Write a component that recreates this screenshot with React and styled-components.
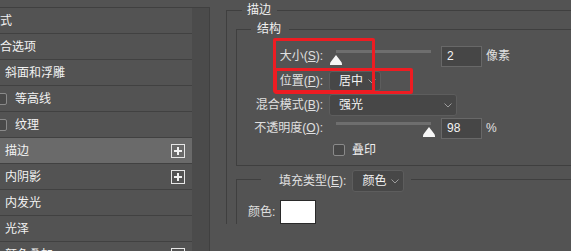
import styled, { createGlobalStyle } from "styled-components"

const GlobalStyle = createGlobalStyle`
  html, body {
    margin: 0;
    height: 100%;
    overflow: hidden;
    background: #535353;
  }
  body {
    font-family: "Liberation Sans", "Noto Sans CJK SC", sans-serif;
    font-size: 12px;
    color: #e2e2e2;
  }
`

const Page = styled.div`
  position: relative;
  display: flex;
  width: 571px;
  height: 251px;
  overflow: hidden;
  background: #535353;
`

const Sidebar = styled.div`
  display: flex;
  flex-shrink: 0;
  width: 210px;
  margin-top: 7px;
  border-top: 1px solid #404040;
`

const List = styled.div`
  width: 192px;
  overflow: hidden;
`

const Row = styled.div`
  display: flex;
  align-items: center;
  height: 25px;
  padding: 0 4px 0 5px;
  border-bottom: 1px solid #414141;
  background: ${(p) => (p.$selected ? "#6a6a6a" : "#535353")};
  color: #f2f2f2;
  line-height: 14px;
  white-space: nowrap;
`

const ItemText = styled.span`
  flex: 1;
  margin-left: ${(p) => p.$offset || 0}px;
`

const ListCheck = styled.span`
  width: 10px;
  height: 10px;
  margin: 0 8px 0 -10px;
  border: 1px solid #8a8a8a;
  border-radius: 2px;
  background: #494949;
`

const PlusBox = styled.span`
  position: relative;
  width: 12px;
  height: 12px;
  border: 1px solid #e6e6e6;
  margin-right: 3px;

  &::before,
  &::after {
    content: "";
    position: absolute;
    background: #f2f2f2;
  }
  &::before {
    left: 2px;
    right: 2px;
    top: 5px;
    height: 2px;
  }
  &::after {
    top: 2px;
    bottom: 2px;
    left: 5px;
    width: 2px;
  }
`

const Scrollbar = styled.div`
  width: 17px;
  background: #4b4b4b;
  border-right: 1px solid #404040;
`

const Main = styled.div`
  flex: 1;
  min-width: 0;
  padding-left: 16px;
`

const Group = styled.fieldset`
  min-width: 0;
  margin: ${(p) => p.$margin || "0"};
  padding: ${(p) => p.$padding || "0"};
  border: 1px solid #3f3f3f;
  border-right: none;
  border-bottom: ${(p) => (p.$closed ? "1px solid #3f3f3f" : "none")};
`

const Legend = styled.legend`
  margin-left: ${(p) => p.$offset}px;
  padding: ${(p) => p.$padding};
  line-height: 14px;
  color: #f0f0f0;
`

const LegendRow = styled.span`
  display: flex;
  align-items: center;
  gap: 6px;
`

const FormRow = styled.div`
  display: grid;
  grid-template-columns: 86px auto;
  column-gap: 6px;
  align-items: center;
  height: ${(p) => p.$h}px;
`

const Label = styled.span`
  text-align: right;
  line-height: 14px;
  white-space: nowrap;
  color: #e0e0e0;
`

const Controls = styled.div`
  display: flex;
  align-items: center;
  gap: 4px;
`

const SliderBox = styled.div`
  position: relative;
  width: 108px;
  height: 17px;
`

const Track = styled.div`
  position: absolute;
  left: 7px;
  top: 2px;
  width: 95px;
  height: 3px;
  background: #6e6e6e;
`

const Thumb = styled.svg`
  position: absolute;
  top: 7px;
  margin-left: -6px;
`

const NumberBox = styled.div`
  box-sizing: border-box;
  width: 41px;
  height: 21px;
  padding-left: 5px;
  border: 1px solid #686868;
  background: #464646;
  color: #f4f4f4;
  line-height: 19px;
`

const Unit = styled.span`
  color: #e0e0e0;
  line-height: 14px;
`

const Dropdown = styled.div`
  box-sizing: border-box;
  display: flex;
  align-items: center;
  justify-content: space-between;
  width: ${(p) => p.$w}px;
  height: ${(p) => p.$h}px;
  padding: 0 4px 0 9px;
  border: 1px solid #5d5d5d;
  border-radius: 3px;
  background: #474747;
  color: #f4f4f4;
  line-height: 14px;
`

const Check = styled.span`
  box-sizing: border-box;
  width: 12px;
  height: 12px;
  margin-left: 4px;
  border: 1px solid #8a8a8a;
  border-radius: 2px;
  background: #474747;
`

const CheckLabel = styled.span`
  margin-left: 3px;
  color: #eeeeee;
  line-height: 14px;
`

const ColorRow = styled.div`
  display: flex;
  align-items: center;
  gap: 5px;
`

const Swatch = styled.div`
  width: 34px;
  height: 22px;
  border: 1px solid #2a2a2a;
  background: ${(p) => p.$color};
`

const Mark = styled.div`
  position: absolute;
  left: ${(p) => p.$x}px;
  top: ${(p) => p.$y}px;
  width: ${(p) => p.$w}px;
  height: ${(p) => p.$h}px;
  box-sizing: border-box;
  border: 3px solid #ee1c22;
  border-radius: 2px;
  pointer-events: none;
`

const Chevron = () => (
  <svg width="8" height="5" viewBox="0 0 8 5">
    <polyline points="0.5,0.5 4,4 7.5,0.5" fill="none" stroke="#9c9c9c" strokeWidth="1" />
  </svg>
)

const Slider = ({ pct }) => (
  <SliderBox>
    <Track />
    <Thumb width="12" height="10" viewBox="0 0 12 10" style={{ left: `${7 + pct * 0.95}px` }}>
      <path d="M6 0 L10.6 6 Q12 7.6 12 9 L12 10 L0 10 L0 9 Q0 7.6 1.4 6 Z" fill="#f6f6f6" />
    </Thumb>
  </SliderBox>
)

const Key = ({ k }) => (
  <>
    (<u>{k}</u>):
  </>
)

const items = [
  { text: "样式", offset: -17 },
  { text: "混合选项", offset: -17 },
  { text: "斜面和浮雕" },
  { text: "等高线", check: true },
  { text: "纹理", check: true },
  { text: "描边", plus: true, selected: true },
  { text: "内阴影", plus: true },
  { text: "内发光" },
  { text: "光泽" },
  { text: "颜色叠加", plus: true },
]

const App = () => {
  return (
    <Page>
      <GlobalStyle />
      <Sidebar>
        <List>
          {items.map((item) => (
            <Row key={item.text} $selected={item.selected}>
              {item.check && <ListCheck />}
              <ItemText $offset={item.offset}>{item.text}</ItemText>
              {item.plus && <PlusBox />}
            </Row>
          ))}
        </List>
        <Scrollbar />
      </Sidebar>

      <Main>
        <Group $margin="3px 0 0 0">
          <Legend $offset={15} $padding="0 6px 0 5px">描边</Legend>

          <Group $margin="5px 0 0 9px" $padding="8px 0 5px 0" $closed>
            <Legend $offset={14} $padding="0 8px 0 6px">结构</Legend>

            <FormRow $h={24}>
              <Label>大小<Key k="S" /></Label>
              <Controls>
                <Slider pct={0} />
                <NumberBox>2</NumberBox>
                <Unit>像素</Unit>
              </Controls>
            </FormRow>

            <FormRow $h={26}>
              <Label>位置<Key k="P" /></Label>
              <Controls>
                <Dropdown $w={52} $h={20}>
                  居中
                  <Chevron />
                </Dropdown>
              </Controls>
            </FormRow>

            <FormRow $h={22}>
              <Label>混合模式<Key k="B" /></Label>
              <Controls>
                <Dropdown $w={128} $h={22}>
                  强光
                  <Chevron />
                </Dropdown>
              </Controls>
            </FormRow>

            <FormRow $h={24}>
              <Label>不透明度<Key k="O" /></Label>
              <Controls>
                <Slider pct={98} />
                <NumberBox>98</NumberBox>
                <Unit>%</Unit>
              </Controls>
            </FormRow>

            <FormRow $h={20}>
              <span />
              <Controls>
                <Check />
                <CheckLabel>叠印</CheckLabel>
              </Controls>
            </FormRow>
          </Group>

          <Group $margin="0 0 0 9px" $padding="8px 0 0 11px">
            <Legend $offset={13} $padding="4px 7px 0 18px">
              <LegendRow>
                <Label>填充类型<Key k="E" /></Label>
                <Dropdown $w={52} $h={22}>
                  颜色
                  <Chevron />
                </Dropdown>
              </LegendRow>
            </Legend>

            <ColorRow>
              <Label>颜色:</Label>
              <Swatch $color="#ffffff" />
            </ColorRow>
          </Group>
        </Group>
      </Main>

      <Mark $x={273} $y={38} $w={102} $h={55} />
      <Mark $x={274} $y={68} $w={139} $h={26} />
    </Page>
  )
}

export default App
